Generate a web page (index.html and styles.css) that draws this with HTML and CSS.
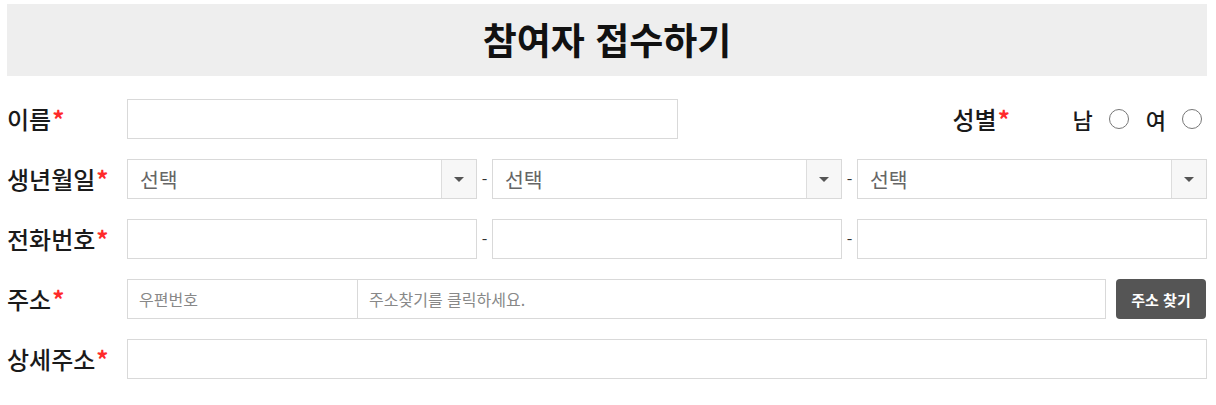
FILE: index.html
```html
<!DOCTYPE html>
<html lang="ko">
<head>
<meta charset="utf-8">
<title>참여자 접수하기</title>
<link rel="stylesheet" href="styles.css">
</head>
<body>
<div class="wrap">
  <h1 class="title">참여자 접수하기</h1>
  <form class="form">
    <div class="row">
      <label class="label">이름<span class="req">*</span></label>
      <div class="field">
        <input class="input name" type="text">
        <div class="gender">
          <span class="label glabel">성별<span class="req">*</span></span>
          <label class="radio"><span>남</span><span class="circle"></span></label>
          <label class="radio"><span>여</span><span class="circle"></span></label>
        </div>
      </div>
    </div>
    <div class="row">
      <label class="label">생년월일<span class="req">*</span></label>
      <div class="field triple">
        <div class="select"><span class="sel-text">선택</span><span class="arrow"><i></i></span></div>
        <span class="dash">-</span>
        <div class="select"><span class="sel-text">선택</span><span class="arrow"><i></i></span></div>
        <span class="dash">-</span>
        <div class="select"><span class="sel-text">선택</span><span class="arrow"><i></i></span></div>
      </div>
    </div>
    <div class="row">
      <label class="label">전화번호<span class="req">*</span></label>
      <div class="field triple">
        <input class="input" type="text">
        <span class="dash">-</span>
        <input class="input" type="text">
        <span class="dash">-</span>
        <input class="input" type="text">
      </div>
    </div>
    <div class="row">
      <label class="label">주소<span class="req">*</span></label>
      <div class="field addr">
        <input class="input zip" type="text" placeholder="우편번호">
        <input class="input road" type="text" placeholder="주소찾기를 클릭하세요.">
        <button type="button" class="btn">주소 찾기</button>
      </div>
    </div>
    <div class="row">
      <label class="label">상세주소<span class="req">*</span></label>
      <div class="field">
        <input class="input full" type="text">
      </div>
    </div>
  </form>
</div>
</body>
</html>
```

FILE: styles.css
```css
* { box-sizing: border-box; }
body {
  margin: 0;
  background: #fff;
  font-family: "Noto Sans CJK KR", "Noto Sans", sans-serif;
  color: #222;
}
.wrap {
  width: 1200px;
  margin: 4px 0 0 7px;
}
.title {
  margin: 0;
  height: 72px;
  background: #eeeeee;
  font-size: 37px;
  font-weight: 700;
  line-height: 70px;
  text-align: center;
  color: #111;
}
.form {
  margin-top: 23px;
  display: flex;
  flex-direction: column;
  gap: 20px;
}
.row {
  display: flex;
  height: 40px;
  align-items: center;
}
.label {
  width: 120px;
  flex: none;
  font-size: 24px;
  font-weight: 500;
  color: #1a1a1a;
  line-height: 40px;
}
.req {
  color: #ff2a2a;
  font-weight: 700;
  margin-left: 1px;
}
.field {
  flex: 1;
  display: flex;
  align-items: center;
  height: 40px;
}
.input {
  height: 40px;
  border: 1px solid #d9d9d9;
  background: #fff;
  padding: 0 11px;
  font-family: inherit;
  font-size: 16px;
  color: #333;
  outline: none;
  margin: 0;
}
.input::placeholder { color: #888; }
.name { width: 551px; }
.gender {
  margin-left: auto;
  display: flex;
  align-items: center;
  height: 40px;
  padding-right: 5px;
}
.glabel { width: 120px; }
.radio {
  display: flex;
  align-items: center;
  font-size: 22px;
  font-weight: 500;
  color: #1a1a1a;
}
.radio + .radio { margin-left: 17px; }
.circle {
  width: 20px;
  height: 20px;
  border: 1px solid #777;
  border-radius: 50%;
  margin-left: 16px;
  background: #fff;
}
.triple .input, .triple .select { width: 350px; }
.dash {
  width: 15px;
  text-align: center;
  font-size: 16px;
  color: #333;
}
.select {
  height: 40px;
  border: 1px solid #d9d9d9;
  display: flex;
  align-items: center;
  background: #fff;
}
.sel-text {
  flex: 1;
  padding-left: 12px;
  font-size: 20.5px;
  color: #666;
}
.arrow {
  width: 35px;
  height: 38px;
  border-left: 1px solid #dddddd;
  background: #f7f7f7;
  display: flex;
  align-items: center;
  justify-content: center;
}
.arrow i {
  width: 0;
  height: 0;
  border-left: 5px solid transparent;
  border-right: 5px solid transparent;
  border-top: 5px solid #555;
}
.zip { width: 231px; }
.road { width: 749px; margin-left: -1px; }
.btn {
  margin-left: 10px;
  width: 90px;
  height: 40px;
  border: 0;
  border-radius: 4px;
  background: #555555;
  color: #fff;
  font-family: inherit;
  font-size: 15px;
  font-weight: 700;
  padding: 0;
}
.full { width: 1080px; }
```
